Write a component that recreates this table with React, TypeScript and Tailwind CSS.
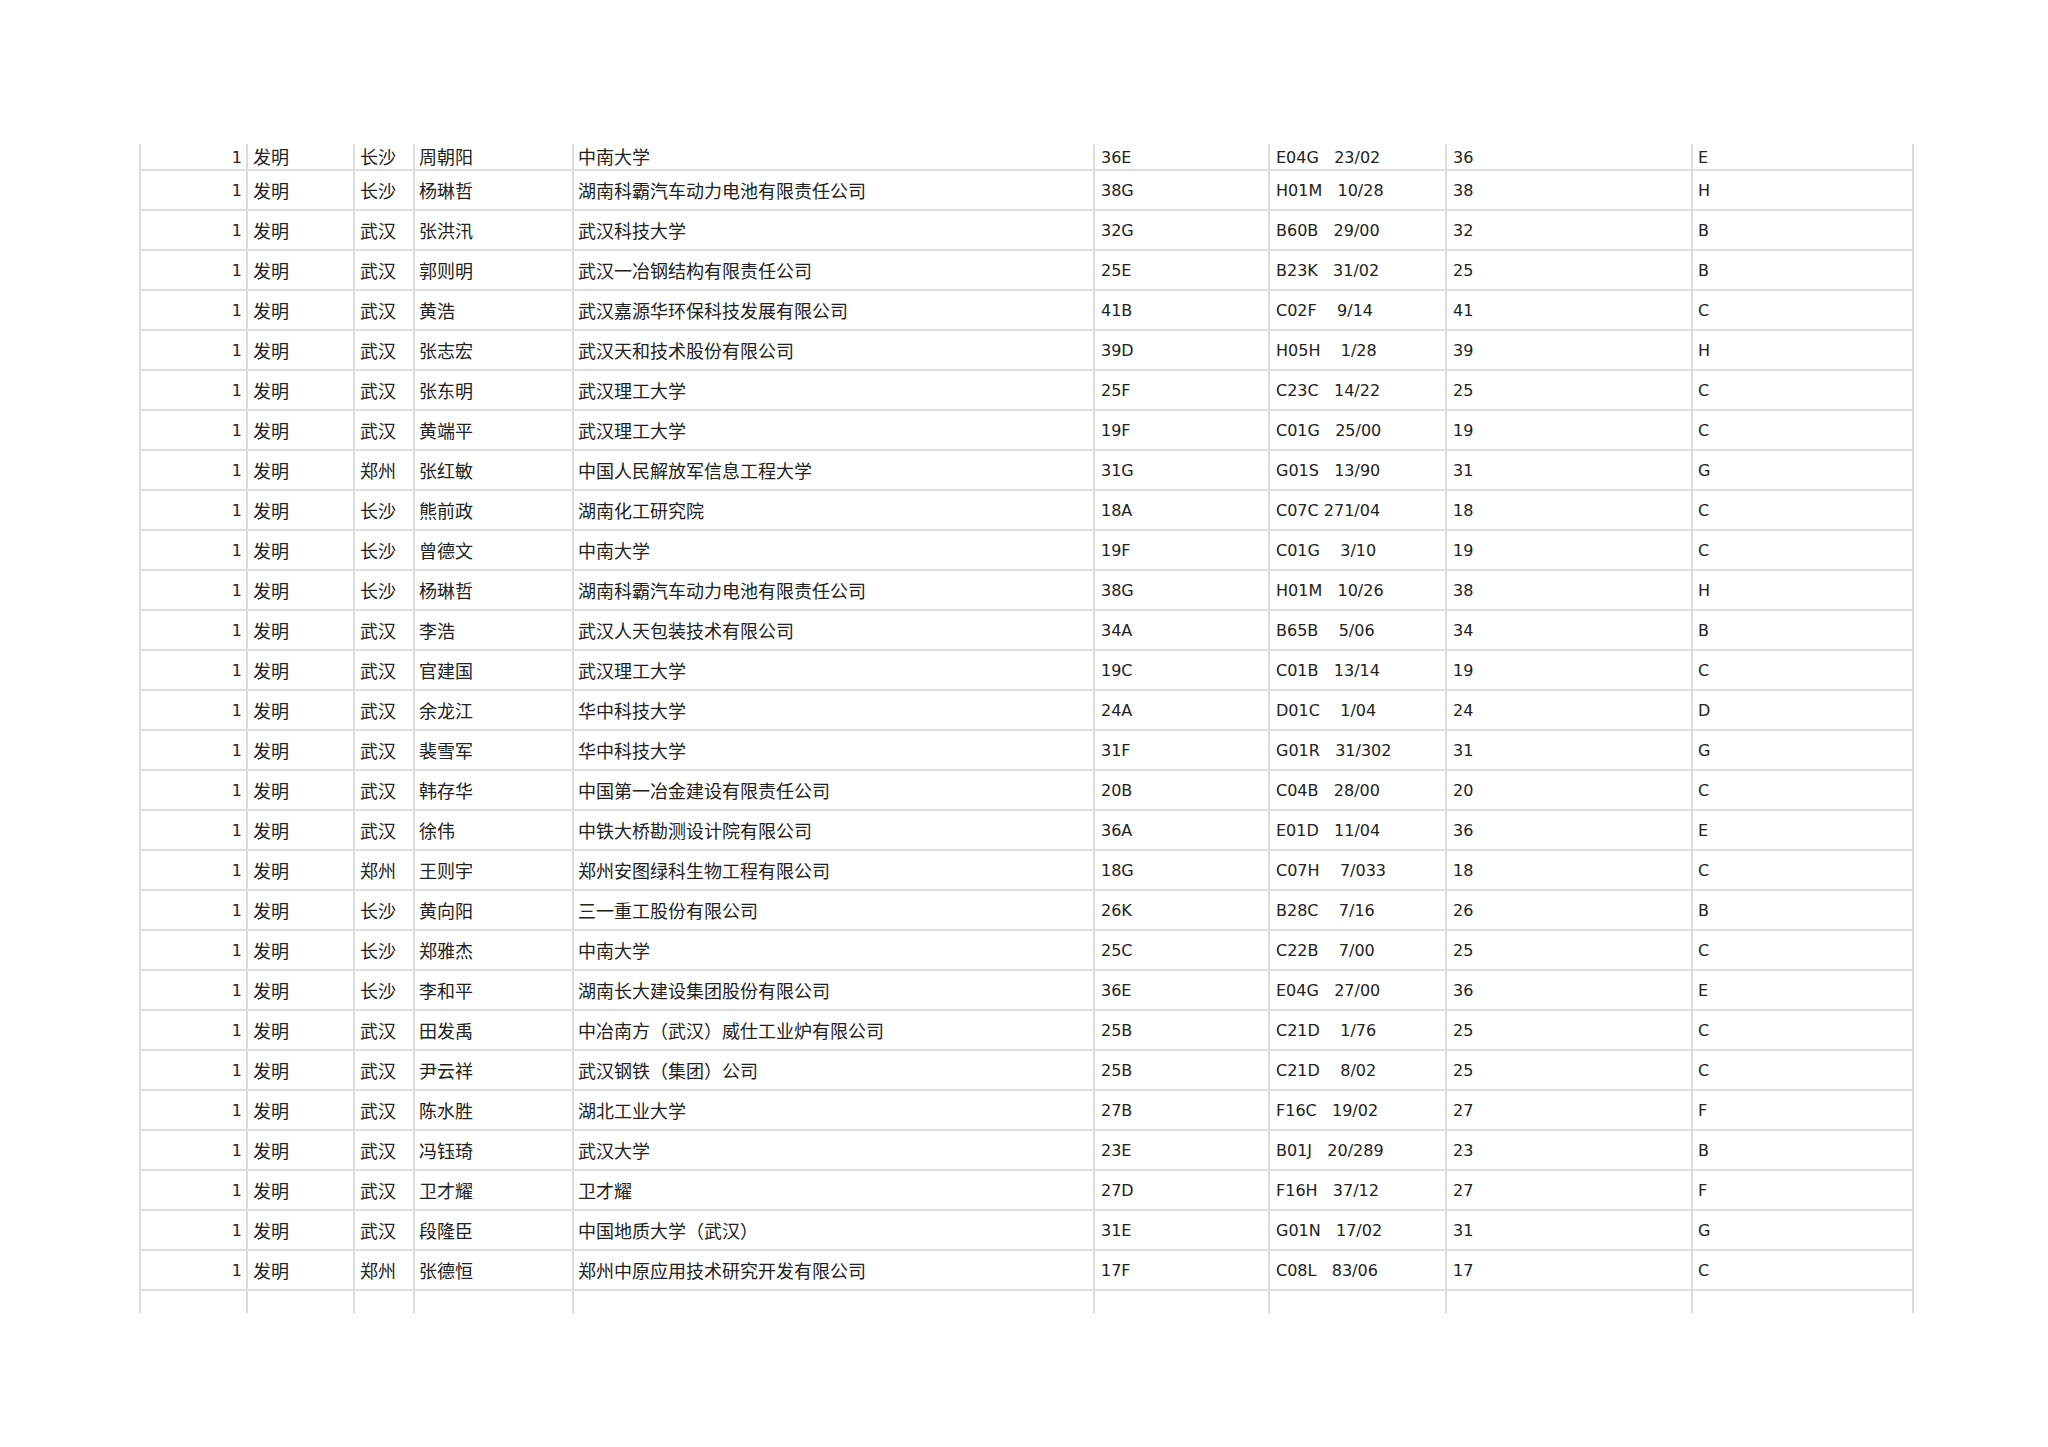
const rows: string[][] = [
  ["长沙", "周朝阳", "中南大学", "36E", "E04G   23/02", "36", "E"],
  ["长沙", "杨琳哲", "湖南科霸汽车动力电池有限责任公司", "38G", "H01M   10/28", "38", "H"],
  ["武汉", "张洪汛", "武汉科技大学", "32G", "B60B   29/00", "32", "B"],
  ["武汉", "郭则明", "武汉一冶钢结构有限责任公司", "25E", "B23K   31/02", "25", "B"],
  ["武汉", "黄浩", "武汉嘉源华环保科技发展有限公司", "41B", "C02F    9/14", "41", "C"],
  ["武汉", "张志宏", "武汉天和技术股份有限公司", "39D", "H05H    1/28", "39", "H"],
  ["武汉", "张东明", "武汉理工大学", "25F", "C23C   14/22", "25", "C"],
  ["武汉", "黄端平", "武汉理工大学", "19F", "C01G   25/00", "19", "C"],
  ["郑州", "张红敏", "中国人民解放军信息工程大学", "31G", "G01S   13/90", "31", "G"],
  ["长沙", "熊前政", "湖南化工研究院", "18A", "C07C 271/04", "18", "C"],
  ["长沙", "曾德文", "中南大学", "19F", "C01G    3/10", "19", "C"],
  ["长沙", "杨琳哲", "湖南科霸汽车动力电池有限责任公司", "38G", "H01M   10/26", "38", "H"],
  ["武汉", "李浩", "武汉人天包装技术有限公司", "34A", "B65B    5/06", "34", "B"],
  ["武汉", "官建国", "武汉理工大学", "19C", "C01B   13/14", "19", "C"],
  ["武汉", "余龙江", "华中科技大学", "24A", "D01C    1/04", "24", "D"],
  ["武汉", "裴雪军", "华中科技大学", "31F", "G01R   31/302", "31", "G"],
  ["武汉", "韩存华", "中国第一冶金建设有限责任公司", "20B", "C04B   28/00", "20", "C"],
  ["武汉", "徐伟", "中铁大桥勘测设计院有限公司", "36A", "E01D   11/04", "36", "E"],
  ["郑州", "王则宇", "郑州安图绿科生物工程有限公司", "18G", "C07H    7/033", "18", "C"],
  ["长沙", "黄向阳", "三一重工股份有限公司", "26K", "B28C    7/16", "26", "B"],
  ["长沙", "郑雅杰", "中南大学", "25C", "C22B    7/00", "25", "C"],
  ["长沙", "李和平", "湖南长大建设集团股份有限公司", "36E", "E04G   27/00", "36", "E"],
  ["武汉", "田发禹", "中冶南方（武汉）威仕工业炉有限公司", "25B", "C21D    1/76", "25", "C"],
  ["武汉", "尹云祥", "武汉钢铁（集团）公司", "25B", "C21D    8/02", "25", "C"],
  ["武汉", "陈水胜", "湖北工业大学", "27B", "F16C   19/02", "27", "F"],
  ["武汉", "冯钰琦", "武汉大学", "23E", "B01J   20/289", "23", "B"],
  ["武汉", "卫才耀", "卫才耀", "27D", "F16H   37/12", "27", "F"],
  ["武汉", "段隆臣", "中国地质大学（武汉）", "31E", "G01N   17/02", "31", "G"],
  ["郑州", "张德恒", "郑州中原应用技术研究开发有限公司", "17F", "C08L   83/06", "17", "C"],
];

const latin = "font-['DejaVu_Sans','Noto_Sans_CJK_SC',sans-serif] text-[16px] pt-[2px]";
const cjk = "font-['Noto_Sans_CJK_SC','DejaVu_Sans',sans-serif] text-[18px] font-normal";
const cell = "flex items-center border-l-2 border-[#dcdcdc] overflow-hidden whitespace-pre";
const grid = "grid grid-cols-[107px_107px_60px_159px_521px_175px_177px_246px_223px]";

function Row({ r, first }: { r: string[]; first?: boolean }) {
  return (
    <div className={`${grid} ${first ? "h-[27px]" : "h-[40px]"} border-b-2 border-[#dcdcdc]`}>
      <div className={`${cell} ${latin} justify-end pr-[4px]`}>1</div>
      <div className={`${cell} ${cjk} pl-[5px]`}>发明</div>
      <div className={`${cell} ${cjk} pl-[5px]`}>{r[0]}</div>
      <div className={`${cell} ${cjk} pl-[4px]`}>{r[1]}</div>
      <div className={`${cell} ${cjk} pl-[4px]`}>{r[2]}</div>
      <div className={`${cell} ${latin} pl-[6px]`}>{r[3]}</div>
      <div className={`${cell} ${latin} pl-[6px]`}>{r[4]}</div>
      <div className={`${cell} ${latin} pl-[6px]`}>{r[5]}</div>
      <div className={`${cell} ${latin} pl-[5px] border-r-2`}>{r[6]}</div>
    </div>
  );
}

export default function App() {
  return (
    <div className="w-[2048px] h-[1447px] bg-white text-[#222] pt-[144px] pl-[139px]">
      <div className="w-[1775px]">
        {rows.map((r, i) => (
          <Row key={i} r={r} first={i === 0} />
        ))}
        {/* empty trailing row, cut off */}
        <div className={`${grid} h-[22px]`}>
          {Array.from({ length: 9 }).map((_, i) => (
            <div key={i} className={`${cell} ${i === 8 ? "border-r-2" : ""}`} />
          ))}
        </div>
      </div>
    </div>
  );
}
